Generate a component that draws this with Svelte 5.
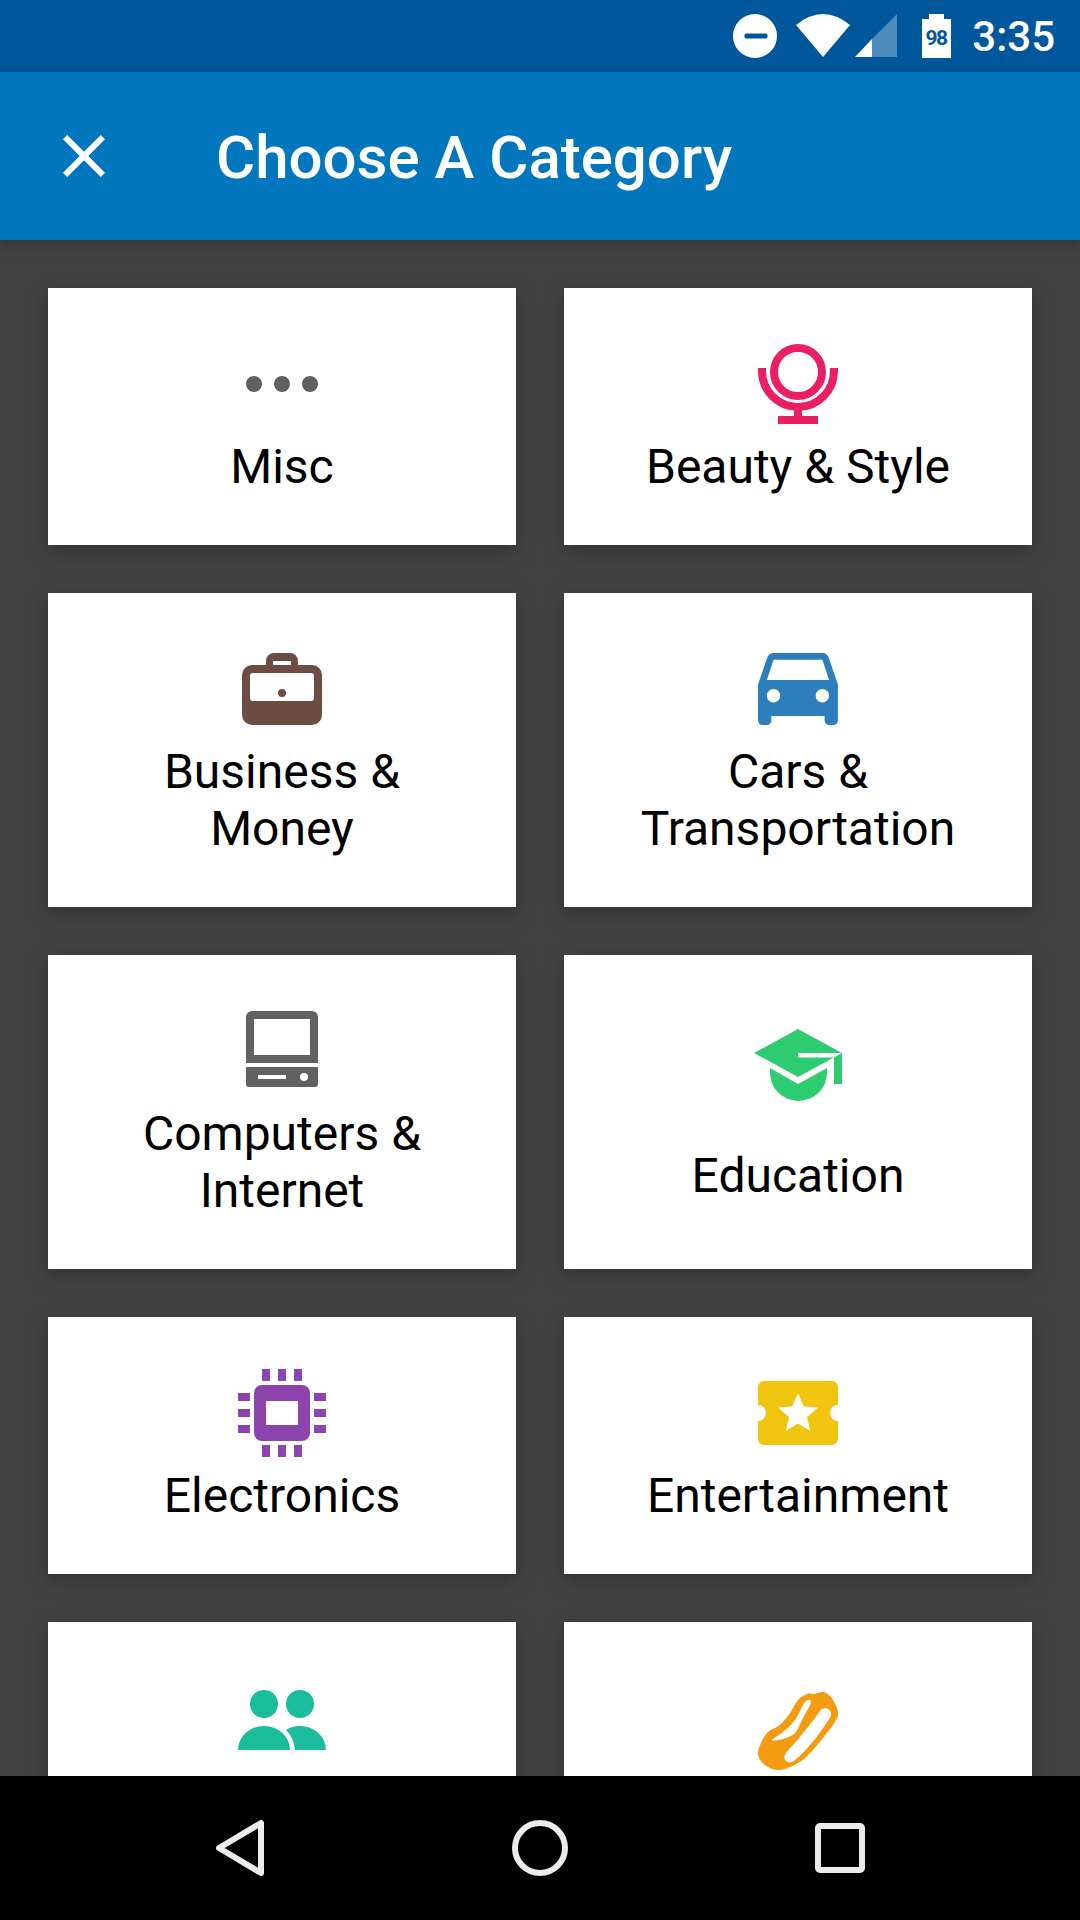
<script>
	// closed catmull-rom through the given points, for the organic hot dog shape
	const smooth = (pts) => {
		const n = pts.length;
		let d = `M${pts[0][0]} ${pts[0][1]}`;
		for (let i = 0; i < n; i++) {
			const [p0, p1, p2, p3] = [pts[(i + n - 1) % n], pts[i], pts[(i + 1) % n], pts[(i + 2) % n]];
			const c1 = [p1[0] + (p2[0] - p0[0]) / 6, p1[1] + (p2[1] - p0[1]) / 6];
			const c2 = [p2[0] - (p3[0] - p1[0]) / 6, p2[1] - (p3[1] - p1[1]) / 6];
			d += `C${c1[0].toFixed(1)} ${c1[1].toFixed(1)} ${c2[0].toFixed(1)} ${c2[1].toFixed(1)} ${p2[0]} ${p2[1]}`;
		}
		return d + 'z';
	};

	const hotdog =
		smooth([[73, 22], [64, 24], [57, 24], [48, 30], [40, 43], [30, 55], [18, 62], [11, 73], [8, 85], [15, 95], [27, 100], [40, 97], [55, 88], [73, 68], [85, 52], [88, 42], [83, 30], [79, 25]]) +
		smooth([[61, 32], [55, 32], [45, 50], [33, 62], [22, 70], [33, 69], [45, 63], [53, 48]]) +
		smooth([[78, 39], [72, 39], [65, 48], [50, 67], [35, 85], [38, 92], [45, 90], [60, 75], [73, 58], [81, 45]]);

	const categories = [
		{
			label: ['Misc'],
			color: '#616161',
			icon: '<circle cx="20" cy="48" r="8"/><circle cx="48" cy="48" r="8"/><circle cx="76" cy="48" r="8"/>'
		},
		{
			label: ['Beauty & Style'],
			color: '#e91e63',
			icon: '<circle cx="48" cy="36" r="24" fill="none" stroke="currentColor" stroke-width="8"/><path d="M12 32v3a36 36 0 0 0 72 0v-3" fill="none" stroke="currentColor" stroke-width="8"/><path d="M44 72h8v8h16v8H28v-8h16z"/>'
		},
		{
			label: ['Business &', 'Money'],
			color: '#6d4c41',
			icon: '<path fill-rule="evenodd" d="M32 24v-4a8 8 0 0 1 8-8h16a8 8 0 0 1 8 8v4h14a10 10 0 0 1 10 10v40a10 10 0 0 1-10 10H18A10 10 0 0 1 8 74V34a10 10 0 0 1 10-10zm7-4v4h18v-4zM19 32a3 3 0 0 0-3 3v22a3 3 0 0 0 3 3h58a3 3 0 0 0 3-3V35a3 3 0 0 0-3-3z"/><circle cx="48" cy="52" r="4"/>'
		},
		{
			label: ['Cars &', 'Transportation'],
			color: '#2c7fbc',
			icon: '<g transform="translate(8 12) scale(4.44 4.5) translate(-3 -5)"><path d="M18.92 6.01C18.72 5.42 18.16 5 17.5 5h-11c-.66 0-1.21.42-1.42 1.01L3 12v8c0 .55.45 1 1 1h1c.55 0 1-.45 1-1v-1h12v1c0 .55.45 1 1 1h1c.55 0 1-.45 1-1v-8l-2.08-5.99zM6.5 16c-.83 0-1.5-.67-1.5-1.5S5.67 13 6.5 13s1.5.67 1.5 1.5S7.33 16 6.5 16zm11 0c-.83 0-1.5-.67-1.5-1.5s.67-1.5 1.5-1.5 1.5.67 1.5 1.5-.67 1.5-1.5 1.5zM5 11l1.5-4.5h11L19 11H5z"/></g>'
		},
		{
			label: ['Computers &', 'Internet'],
			color: '#616161',
			icon: '<path fill-rule="evenodd" d="M18 8h60a6 6 0 0 1 6 6v46H12V14a6 6 0 0 1 6-6zm2 8v36h56V16z"/><path fill-rule="evenodd" d="M12 64h72v17a3 3 0 0 1-3 3H15a3 3 0 0 1-3-3zm12 8v4h28v-4zm46-2a4 4 0 1 0 0 8 4 4 0 0 0 0-8z"/>'
		},
		{
			label: ['Education'],
			color: '#2ecc71',
			spread: true,
			icon: '<path d="M4 36 48 12l44 24-44 24z"/><path d="M48 36h44l-8 4.400H48z" fill="#fff"/><path d="M84 40.400 92 36v31h-8z"/><path d="M20 51l28 16 29-16v5a28.500 28 0 0 1-57 0z"/>'
		},
		{
			label: ['Electronics'],
			color: '#8e44ad',
			icon: '<path fill-rule="evenodd" d="M28 20h40a8 8 0 0 1 8 8v40a8 8 0 0 1-8 8H28a8 8 0 0 1-8-8V28a8 8 0 0 1 8-8zm4 16v24h32V36z"/><path d="M28 4h8v12h-8zM44 4h8v12h-8zM60 4h8v12h-8zM28 80h8v12h-8zM44 80h8v12h-8zM60 80h8v12h-8zM4 28h12v8H4zM4 44h12v8H4zM4 60h12v8H4zM80 28h12v8H80zM80 44h12v8H80zM80 60h12v8H80z"/>'
		},
		{
			label: ['Entertainment'],
			color: '#f1c40f',
			icon: '<path d="M14 16h68a6 6 0 0 1 6 6v18a8 8 0 0 0 0 16v18a6 6 0 0 1-6 6H14a6 6 0 0 1-6-6V56a8 8 0 0 0 0-16V22a6 6 0 0 1 6-6z"/><path fill="#fff" d="M48 28 53.600 41.300 68 42.500 57 51.900 60.300 66 48 58.500 35.700 66 39 51.900 28 42.500 42.400 41.300z"/>'
		},
		{
			// labels of this row sit under the nav bar
			label: [],
			color: '#1abc9c',
			icon: '<ellipse cx="30" cy="34" rx="14" ry="14"/><ellipse cx="66" cy="34" rx="14" ry="14"/><path d="M4 80a26 24 0 0 1 52 0z"/><path d="M61 80q-1-12-9-20 6-4 14-4a26 24 0 0 1 26 24z"/>'
		},
		{
			label: [],
			color: '#f39c12',
			icon: `<path fill-rule="evenodd" d="${hotdog}"/>`
		}
	];
</script>

<div class="phone">
	<div class="status">
		<svg class="dnd" width="44" height="44" viewBox="0 0 44 44">
			<path fill="#fff" fill-rule="evenodd" d="M22 0a22 22 0 1 1 0 44 22 22 0 0 1 0-44zM13 19.500a1.500 1.500 0 0 0-1.500 1.500v2a1.500 1.500 0 0 0 1.500 1.500h20a1.500 1.500 0 0 0 1.500-1.500v-2a1.500 1.500 0 0 0-1.500-1.500z" />
		</svg>
		<svg class="wifi" width="54" height="44" viewBox="0 0 54 44">
			<path fill="#fff" d="M0 11Q27-11 54 11L27 43z" />
		</svg>
		<svg class="signal" width="42" height="44" viewBox="0 0 42 44">
			<path fill="#fff" opacity="0.3" d="M42 0v43H17V25z" />
			<path fill="#fff" d="M0 43l17-18v18z" />
		</svg>
		<svg class="battery" width="29" height="44" viewBox="0 0 29 44">
			<path fill="#fff" d="M7 0h15v5h7v39H0V5h7z" />
			<text x="14" y="31" text-anchor="middle" class="battery-level">98</text>
		</svg>
		<span class="time">3:35</span>
	</div>

	<header class="appbar">
		<svg class="close" width="72" height="72" viewBox="0 0 24 24">
			<path fill="#fff" d="M19 6.410 17.590 5 12 10.590 6.410 5 5 6.410 10.590 12 5 17.590 6.410 19 12 13.410 17.590 19 19 17.590 13.410 12z" />
		</svg>
		<h1>Choose A Category</h1>
	</header>

	<main class="content">
		<div class="grid">
			{#each categories as cat}
				<div class="card" class:spread={cat.spread}>
					<svg class="icon" width="96" height="96" viewBox="0 0 96 96" fill="currentColor" style="color: {cat.color}">
						{@html cat.icon}
					</svg>
					{#if cat.label.length}
						<div class="label">
							{#each cat.label as line}
								<div>{line}</div>
							{/each}
						</div>
					{/if}
				</div>
			{/each}
		</div>
	</main>

	<nav class="navbar">
		<svg width="72" height="72" viewBox="0 0 72 72">
			<path d="M15 36 57 11v50z" fill="none" stroke="#ececec" stroke-width="6" stroke-linejoin="round" />
		</svg>
		<svg width="72" height="72" viewBox="0 0 72 72">
			<circle cx="36" cy="36" r="25" fill="none" stroke="#ececec" stroke-width="6" />
		</svg>
		<svg width="72" height="72" viewBox="0 0 72 72">
			<rect x="14" y="14" width="44" height="44" rx="2" fill="none" stroke="#ececec" stroke-width="6" />
		</svg>
	</nav>
</div>

<style>
	:global(body) {
		margin: 0;
		background: #424242;
	}
	.phone {
		display: flex;
		flex-direction: column;
		width: 1080px;
		height: 1920px;
		overflow: hidden;
		font-family: Roboto, 'Noto Sans', sans-serif;
	}
	.status {
		flex: none;
		display: flex;
		align-items: center;
		justify-content: flex-end;
		height: 72px;
		padding-right: 25px;
		background: #01579b;
	}
	.wifi {
		margin-left: 19px;
	}
	.signal {
		margin-left: 5px;
	}
	.battery {
		margin-left: 25px;
	}
	.battery-level {
		font-size: 21px;
		font-weight: 700;
		letter-spacing: -1.5px;
		fill: #01579b;
	}
	.time {
		margin-left: 21px;
		color: #fff;
		font-size: 42px;
		font-weight: 500;
	}
	.appbar {
		flex: none;
		position: relative;
		z-index: 1;
		display: flex;
		align-items: center;
		gap: 96px;
		height: 168px;
		padding-left: 48px;
		background: #0277bd;
		box-shadow: 0 4px 12px rgba(0, 0, 0, 0.25);
	}
	.appbar h1 {
		margin: 0;
		padding-top: 3px;
		color: #fff;
		font-size: 60px;
		font-weight: 500;
	}
	.content {
		flex: 1;
		min-height: 0;
		overflow: hidden;
		background: #424242;
	}
	.grid {
		display: grid;
		grid-template-columns: 1fr 1fr;
		gap: 48px;
		padding: 48px;
	}
	.card {
		display: flex;
		flex-direction: column;
		align-items: center;
		gap: 6px;
		padding: 48px 0 50px;
		background: #fff;
		box-shadow: 0 6px 18px rgba(0, 0, 0, 0.25);
	}
	.card.spread {
		padding-top: 62px;
		gap: 34px;
	}
	.icon {
		display: block;
		overflow: visible;
	}
	.label {
		color: #000;
		font-size: 48px;
		line-height: 57px;
		text-align: center;
	}
	.navbar {
		flex: none;
		display: grid;
		grid-template-columns: repeat(3, 1fr);
		justify-items: center;
		align-items: center;
		height: 144px;
		padding: 0 90px;
		background: #000;
	}
</style>
